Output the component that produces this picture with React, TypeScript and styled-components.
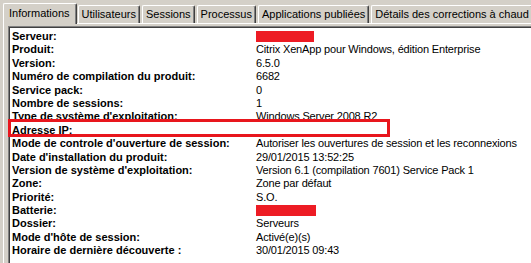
import React from "react";
import styled, { createGlobalStyle } from "styled-components";

const Global = createGlobalStyle`
  html, body { margin: 0; padding: 0; background: #d4d0c8; overflow: hidden; }
  #root { width: 531px; height: 263px; }
`;

const Window = styled.div`
  position: relative;
  width: 531px;
  height: 263px;
  overflow: hidden;
  background: #d4d0c8;
  font-family: "Liberation Sans", Arial, sans-serif;
  font-size: 11px;
  color: #000;
`;

const TabStrip = styled.div`
  display: flex;
  align-items: flex-end;
  height: 23px;
  padding-left: 3px;
  white-space: nowrap;
`;

const Tab = styled.div<{ $active?: boolean }>`
  position: relative;
  box-sizing: border-box;
  height: ${(p) => (p.$active ? "21px" : "18px")};
  margin-bottom: ${(p) => (p.$active ? "-1px" : "0")};
  margin-right: ${(p) => (p.$active ? "1px" : "2px")};
  padding: ${(p) => (p.$active ? "2px 6px 0 5px" : "1px 3px 0 3px")};
  border-top: 1px solid #ffffff;
  border-left: 1px solid #ffffff;
  border-right: 1px solid #404040;
  box-shadow: inset -1px 0 #808080;
  border-top-left-radius: 2px;
  border-top-right-radius: 2px;
  background: #d4d0c8;
  z-index: ${(p) => (p.$active ? 2 : 1)};
  line-height: 14px;
  flex-shrink: 0;
`;

const Panel = styled.div`
  position: relative;
  margin-left: 3px;
  border-top: 1px solid #ffffff;
  border-left: 1px solid #ffffff;
  padding: 2px 0 0 4px;
  height: 260px;
`;

const ListBox = styled.div`
  background: #ffffff;
  border-top: 1px solid #808080;
  border-left: 1px solid #808080;
  box-shadow: inset 1px 1px #404040;
  padding: 3px 0 0 3px;
  height: 100%;
`;

const Row = styled.div`
  display: grid;
  grid-template-columns: 244px 1fr;
  height: 13.4px;
  line-height: 13px;
  white-space: nowrap;
`;

const Label = styled.div`
  font-weight: bold;
`;

const Value = styled.div`
  position: relative;
  letter-spacing: -0.16px;
`;

const Redacted = styled.div<{ $w: number }>`
  width: ${(p) => p.$w}px;
  height: 11px;
  margin-top: 1px;
  background: #ed1c24;
`;

const Highlight = styled.div`
  position: absolute;
  left: 8px;
  top: 119px;
  width: 382px;
  height: 18px;
  box-sizing: border-box;
  border: 3px solid #e8161d;
  z-index: 5;
`;

const tabs = [
  "Informations",
  "Utilisateurs",
  "Sessions",
  "Processus",
  "Applications publiées",
  "Détails des corrections à chaud",
  "",
];

type RowData = { label: string; value?: string; redact?: number };

const rows: RowData[] = [
  { label: "Serveur:", redact: 58 },
  { label: "Produit:", value: "Citrix XenApp pour Windows, édition Enterprise" },
  { label: "Version:", value: "6.5.0" },
  { label: "Numéro de compilation du produit:", value: "6682" },
  { label: "Service pack:", value: "0" },
  { label: "Nombre de sessions:", value: "1" },
  { label: "Type de système d'exploitation:", value: "Windows Server 2008 R2" },
  { label: "Adresse IP:", value: "" },
  { label: "Mode de controle d'ouverture de session:", value: "Autoriser les ouvertures de session et les reconnexions" },
  { label: "Date d'installation du produit:", value: "29/01/2015 13:52:25" },
  { label: "Version de système d'exploitation:", value: "Version 6.1 (compilation 7601) Service Pack 1" },
  { label: "Zone:", value: "Zone par défaut" },
  { label: "Priorité:", value: "S.O." },
  { label: "Batterie:", redact: 60 },
  { label: "Dossier:", value: "Serveurs" },
  { label: "Mode d'hôte de session:", value: "Activé(e)(s)" },
  { label: "Horaire de dernière découverte :", value: "30/01/2015 09:43" },
];

export default function App() {
  return (
    <Window>
      <Global />
      <TabStrip>
        {tabs.map((t, i) => (
          <Tab key={i} $active={i === 0}>
            {t}
          </Tab>
        ))}
      </TabStrip>
      <Panel>
        <ListBox>
          {rows.map((r) => (
            <Row key={r.label}>
              <Label>{r.label}</Label>
              <Value>{r.redact ? <Redacted $w={r.redact} /> : r.value}</Value>
            </Row>
          ))}
        </ListBox>
      </Panel>
      <Highlight />
    </Window>
  );
}
